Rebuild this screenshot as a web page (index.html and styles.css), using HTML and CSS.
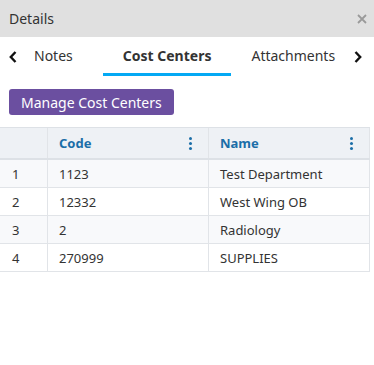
FILE: index.html
```html
<!DOCTYPE html>
<html lang="en">

<head>
    <meta charset="UTF-8">
    <meta name="viewport" content="width=device-width, initial-scale=1.0">
    <title>Details</title>
    <link rel="stylesheet" href="styles.css">
</head>

<body>
    <div class="panel-header">
        <span class="panel-title">Details</span>
        <span class="close-button">
            <svg width="10" height="10" viewBox="0 0 10 10"><path d="M1 1 L9 9 M9 1 L1 9" stroke="#9a9a9a" stroke-width="1.8"/></svg>
        </span>
    </div>

    <div class="tab-bar">
        <span class="tab-arrow">
            <svg width="8" height="12" viewBox="0 0 8 12"><path d="M6.5 1 L1.8 6 L6.5 11" fill="none" stroke="#111" stroke-width="2.4"/></svg>
        </span>
        <div class="tabs">
            <span class="tab tab-notes">Notes</span>
            <span class="tab active">Cost Centers</span>
            <span class="tab">Attachments</span>
        </div>
        <span class="tab-arrow">
            <svg width="8" height="12" viewBox="0 0 8 12"><path d="M1.5 1 L6.2 6 L1.5 11" fill="none" stroke="#111" stroke-width="2.4"/></svg>
        </span>
    </div>

    <div class="toolbar">
        <button class="button">Manage Cost Centers</button>
    </div>

    <div class="grid">
        <div class="grid-row grid-head">
            <div class="cell"></div>
            <div class="cell">Code <span class="kebab"></span></div>
            <div class="cell">Name <span class="kebab"></span></div>
        </div>
        <div class="grid-row odd">
            <div class="cell">1</div>
            <div class="cell">1123</div>
            <div class="cell">Test Department</div>
        </div>
        <div class="grid-row">
            <div class="cell">2</div>
            <div class="cell">12332</div>
            <div class="cell">West Wing OB</div>
        </div>
        <div class="grid-row odd">
            <div class="cell">3</div>
            <div class="cell">2</div>
            <div class="cell">Radiology</div>
        </div>
        <div class="grid-row">
            <div class="cell">4</div>
            <div class="cell">270999</div>
            <div class="cell">SUPPLIES</div>
        </div>
    </div>
</body>

</html>
```

FILE: styles.css
```css
body {
    margin: 0;
    font-family: "Noto Sans", "Open Sans", sans-serif;
    color: #333;
    background: #fff;
}

.panel-header {
    display: flex;
    align-items: center;
    justify-content: space-between;
    height: 37px;
    padding: 0 7px 0 9px;
    background-color: #e0e0e0;
}

.panel-title {
    font-size: 14px;
    color: #333;
}

.close-button {
    display: flex;
    margin-top: 1px;
}

.tab-bar {
    display: flex;
    align-items: center;
    height: 39px;
}

.tab-arrow {
    display: flex;
    align-items: center;
    height: 100%;
}

.tab-arrow:first-child {
    padding-left: 9px;
    width: 17px;
}

.tab-arrow:last-child {
    width: 26px;
    justify-content: flex-end;
    padding-right: 12px;
}

.tabs {
    flex: 1;
    display: flex;
    height: 100%;
    overflow: hidden;
}

.tab {
    display: flex;
    align-items: center;
    height: 100%;
    box-sizing: border-box;
    padding: 0 20px;
    font-size: 14px;
    color: #333;
    white-space: nowrap;
    border-bottom: 3px solid transparent;
}

.tab-notes {
    padding: 0 30px 0 8px;
}

.tab.active {
    font-weight: bold;
    border-bottom-color: #03a9f4;
}

.toolbar {
    padding: 13px 9px 12px;
}

.button {
    height: 26px;
    padding: 0 12px;
    font-family: inherit;
    font-size: 14px;
    color: #fff;
    background-color: #6b4fa0;
    border: none;
    border-radius: 3px;
}

.grid {
    width: 370px;
    font-size: 13px;
}

.grid-row {
    display: grid;
    grid-template-columns: 48px 161px 161px;
    height: 28px;
    border-bottom: 1px solid #e1e4e8;
    box-sizing: border-box;
}

.grid-row.odd {
    background-color: #f8f9fb;
}

.grid-head {
    height: 33px;
    background-color: #eef1f5;
    border-top: 1px solid #dde1e6;
    border-bottom: 2px solid #dde1e6;
    font-weight: bold;
    color: #1b6ea8;
}

.cell {
    display: flex;
    align-items: center;
    padding-left: 11px;
    border-right: 1px solid #e1e4e8;
    position: relative;
}

.grid-row .cell:first-child {
    padding-left: 12px;
}

.kebab {
    position: absolute;
    right: 16px;
    top: 50%;
    width: 3px;
    height: 3px;
    margin-top: -6px;
    border-radius: 50%;
    background: #1b6ea8;
    box-shadow: 0 5px 0 #1b6ea8, 0 10px 0 #1b6ea8;
}
```
